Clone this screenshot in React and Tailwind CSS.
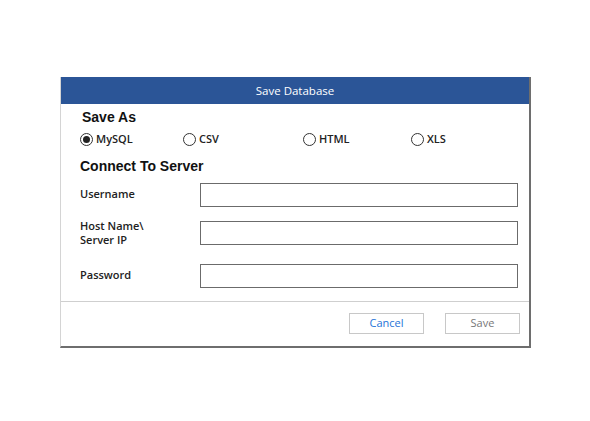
const FORMATS = [
  { label: 'MySQL', checked: true, w: 'w-[103px]' },
  { label: 'CSV', checked: false, w: 'w-[120px]' },
  { label: 'HTML', checked: false, w: 'w-[108px]' },
  { label: 'XLS', checked: false, w: 'w-[60px]' },
]

function Radio({ label, checked, w }) {
  return (
    <div className={`flex items-center gap-[3px] ${w}`}>
      <span className="w-[13px] h-[13px] rounded-full border border-[#333] flex items-center justify-center shrink-0">
        {checked && <span className="w-[7px] h-[7px] rounded-full bg-[#222]" />}
      </span>
      <span className="text-[11px] font-semibold text-[#222]">{label}</span>
    </div>
  )
}

function Field({ lines, className = '' }) {
  return (
    <div className={`flex items-center h-[24px] ${className}`}>
      <div
        className={`w-[120px] shrink-0 text-[11px] font-semibold text-[#222] leading-[14px] flex flex-col ${
          lines.length === 1 ? 'pb-[3px]' : ''
        }`}
      >
        {lines.map((l) => (
          <div key={l}>{l}</div>
        ))}
      </div>
      <div className="w-[318px] h-[24px] shrink-0 border-[1.5px] border-[#6b6b6b] bg-white" />
    </div>
  )
}

export default function App() {
  return (
    <div className="w-[590px] h-[421px] bg-white pt-[77px] pl-[60px] font-['Open_Sans',sans-serif]">
      <div className="w-[471px] h-[271px] bg-white border-l border-[#d4d4d4] border-r-2 border-b-2 border-r-[#6e6e6e] border-b-[#6e6e6e] flex flex-col">
        <div className="h-[27px] bg-[#2b5597] flex items-center justify-center text-white text-[11.5px]">
          Save Database
        </div>
        <div className="pl-[19px] pr-[10px] pt-[3px]">
          <div className="pl-[2px] text-[14px] font-bold text-[#111] font-['Liberation_Sans',Arial,sans-serif] leading-[20px]">
            Save As
          </div>
          <div className="flex items-center h-[18px] mt-[3px]">
            {FORMATS.map((f) => (
              <Radio key={f.label} {...f} />
            ))}
          </div>
          <div className="mt-[10px] text-[14px] font-bold text-[#111] font-['Liberation_Sans',Arial,sans-serif] leading-[16px]">
            Connect To Server
          </div>
          <div className="mt-[9px] flex flex-col">
            <Field lines={['Username']} />
            <Field lines={['Host Name\\', 'Server IP']} className="mt-[14px]" />
            <Field lines={['Password']} className="mt-[19px]" />
          </div>
        </div>
        <div className="mt-[13px] border-t border-[#cfcfcf]" />
        <div className="flex justify-end gap-[21px] pr-[9px] pt-[11px]">
          <button className="w-[75px] h-[21px] border border-[#c8c8c8] bg-white text-[11px] text-[#1e73d8]">
            Cancel
          </button>
          <button className="w-[75px] h-[21px] border border-[#c8c8c8] bg-white text-[11px] text-[#777]">
            Save
          </button>
        </div>
      </div>
    </div>
  )
}
